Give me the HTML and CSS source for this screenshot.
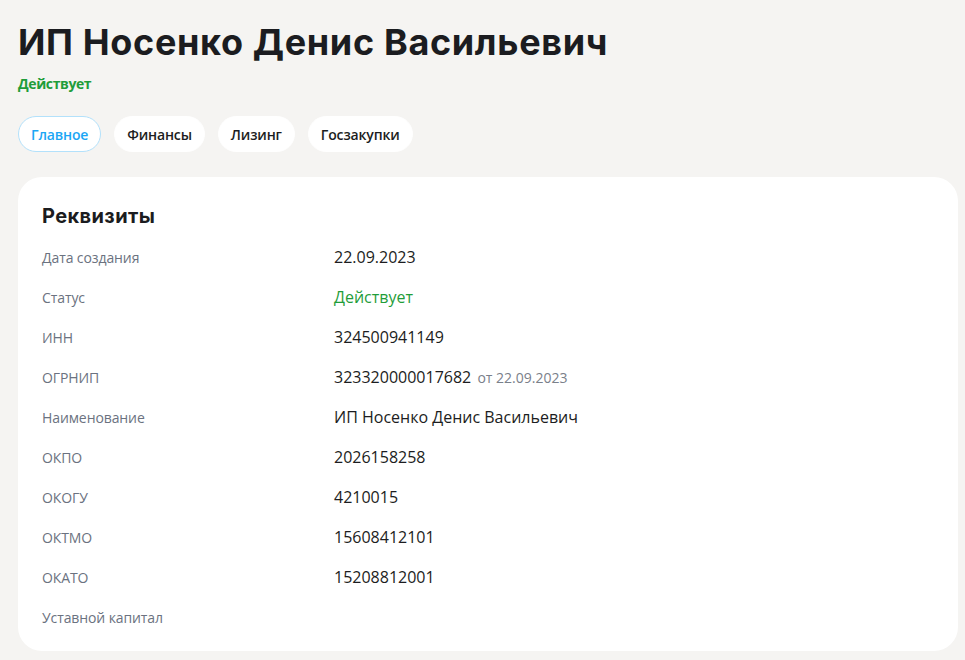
FILE: index.html
```html
<!DOCTYPE html>
<html lang="ru">
<head>
<meta charset="utf-8">
<link rel="stylesheet" href="styles.css">
</head>
<body>
<div class="page">
  <h1 class="title">ИП Носенко Денис Васильевич</h1>
  <div class="status">Действует</div>
  <nav class="tabs">
    <a class="tab active">Главное</a>
    <a class="tab">Финансы</a>
    <a class="tab">Лизинг</a>
    <a class="tab">Госзакупки</a>
  </nav>
  <section class="card">
    <h2 class="card-title">Реквизиты</h2>
    <div class="rows">
      <div class="row"><div class="label">Дата создания</div><div class="value">22.09.2023</div></div>
      <div class="row"><div class="label">Статус</div><div class="value green">Действует</div></div>
      <div class="row"><div class="label">ИНН</div><div class="value">324500941149</div></div>
      <div class="row"><div class="label">ОГРНИП</div><div class="value">323320000017682 <span class="sub">от 22.09.2023</span></div></div>
      <div class="row"><div class="label">Наименование</div><div class="value">ИП Носенко Денис Васильевич</div></div>
      <div class="row"><div class="label">ОКПО</div><div class="value">2026158258</div></div>
      <div class="row"><div class="label">ОКОГУ</div><div class="value">4210015</div></div>
      <div class="row"><div class="label">ОКТМО</div><div class="value">15608412101</div></div>
      <div class="row"><div class="label">ОКАТО</div><div class="value">15208812001</div></div>
      <div class="row"><div class="label">Уставной капитал</div><div class="value"></div></div>
    </div>
  </section>
</div>
</body>
</html>
```
FILE: styles.css
```css
* { box-sizing: border-box; }
html, body { margin: 0; padding: 0; }
body {
  background: #f5f4f2;
  font-family: "Open Sans", "Noto Sans", sans-serif;
  color: #1c1d21;
}
.page {
  padding: 20px 7px 0 18px;
}
.title {
  margin: 0;
  font-family: Inter, "Noto Sans", sans-serif;
  font-weight: 700;
  font-size: 36px;
  line-height: 44px;
  letter-spacing: 0.65px;
  color: #1b1c20;
}
.status {
  margin-top: 10px;
  font-size: 14px;
  font-weight: 700;
  line-height: 20px;
  color: #1f9d3a;
  letter-spacing: -0.4px;
}
.tabs {
  display: flex;
  gap: 13px;
  margin-top: 22px;
}
.tab {
  display: flex;
  align-items: center;
  height: 36px;
  padding: 0 12px;
  border-radius: 18px;
  background: #fff;
  border: 1px solid #fff;
  font-size: 14px;
  font-weight: 600;
  color: #1c1d21;
  letter-spacing: -0.15px;
}
.tab.active {
  color: #1ba6f5;
  border-color: #b3e1fb;
}
.card {
  margin-top: 25px;
  background: #fff;
  border-radius: 24px;
  padding: 25px 24px 14px;
}
.card-title {
  margin: 0 0 7px;
  font-family: Inter, "Noto Sans", sans-serif;
  font-weight: 700;
  font-size: 20px;
  line-height: 28px;
  color: #1b1c20;
  letter-spacing: 0.4px;
}
.row {
  display: grid;
  grid-template-columns: 292px 1fr;
  align-items: center;
  height: 40px;
}
.label {
  font-size: 14px;
  color: #6b7280;
  letter-spacing: -0.1px;
}
.value {
  font-size: 16px;
  color: #1c1d21;
  letter-spacing: 0;
}
.value.green { color: #1f9d3a; }
.sub {
  font-size: 14px;
  color: #7a808a;
  margin-left: 2px;
}
```
